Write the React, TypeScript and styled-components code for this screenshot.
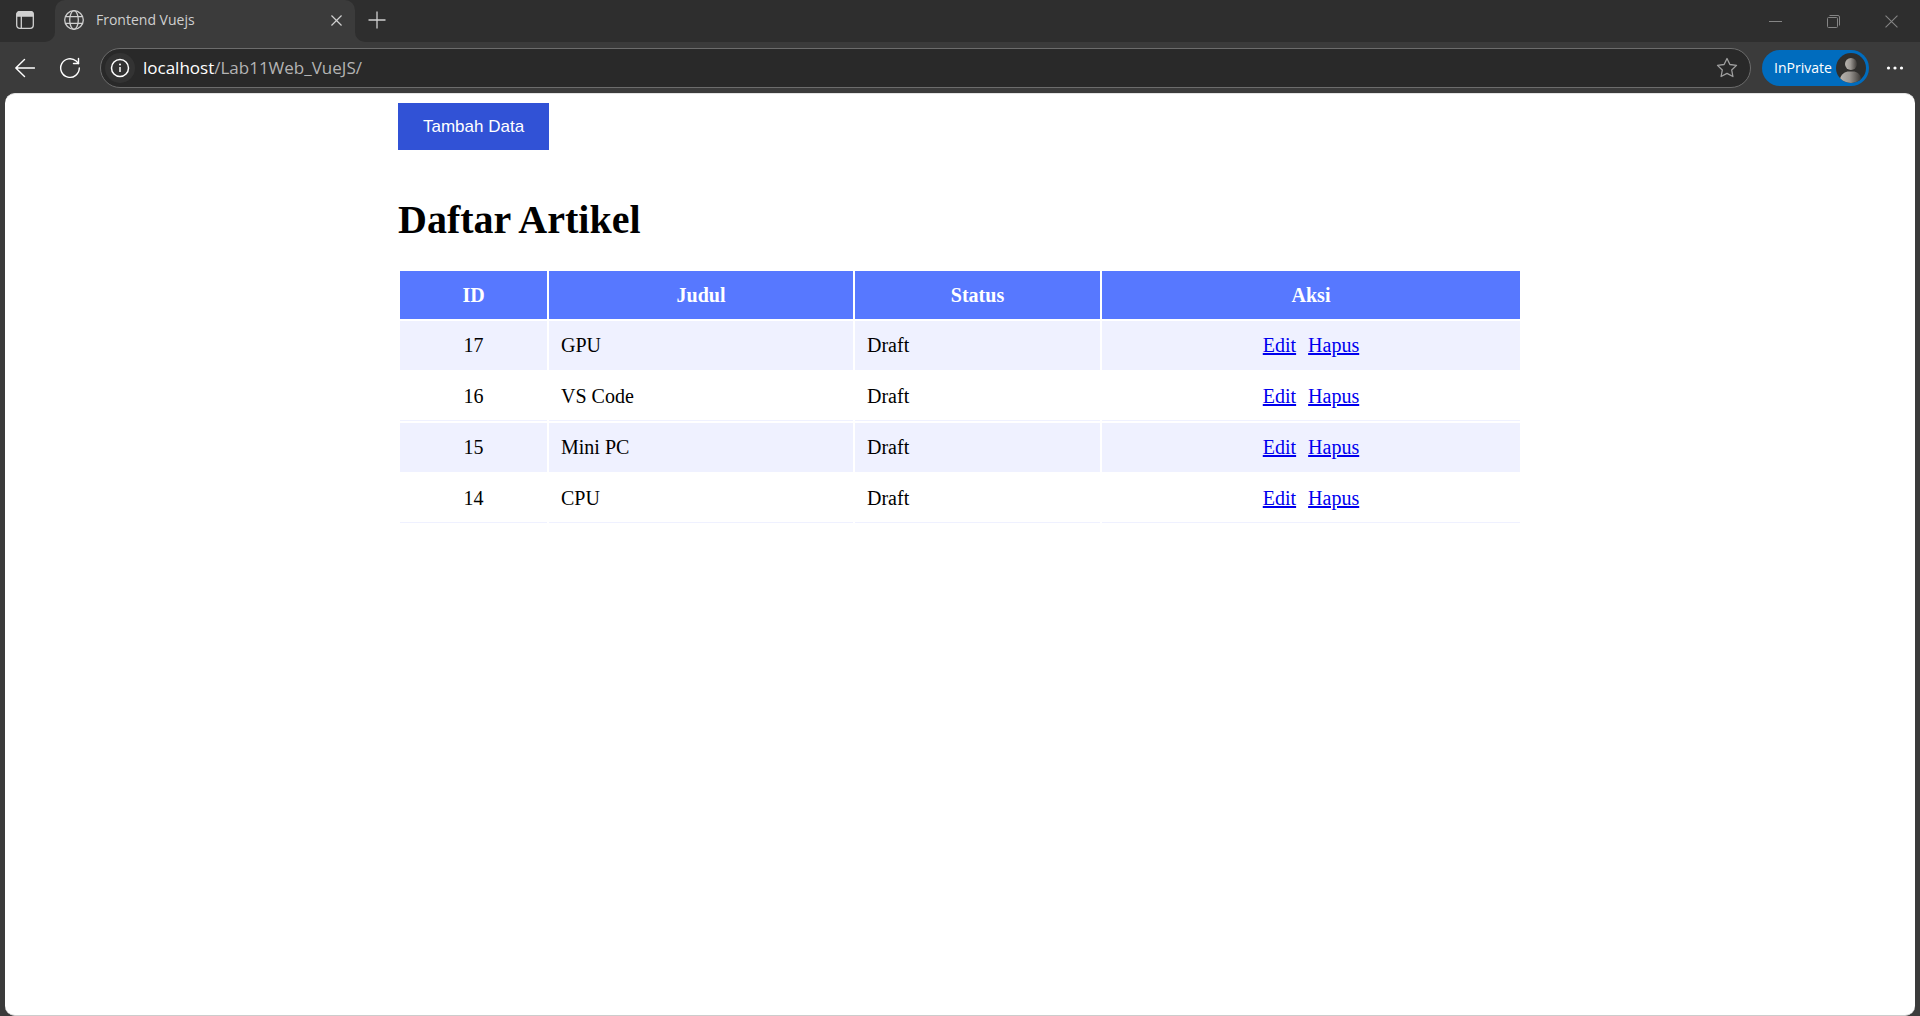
import React from "react";
import styled, { createGlobalStyle } from "styled-components";

const GlobalStyle = createGlobalStyle`
  *, *::before, *::after { box-sizing: border-box; }
  body { margin: 0; background: #3b3b3b; }
  button { margin: 0; padding: 0; border: 0; background: none; color: inherit; cursor: pointer; }
  svg { display: block; }
`;

const uiFont = `"Open Sans", "Noto Sans", sans-serif`;

const Window = styled.div`
  display: flex;
  flex-direction: column;
  min-height: 100vh;
  background: #3b3b3b;
  font-family: ${uiFont};
`;

const TitleBar = styled.header`
  display: flex;
  height: 42px;
  background: #3b3b3b;
  color: #d0d0d0;
`;

const TabActions = styled.div`
  display: flex;
  width: 55px;
  padding-left: 3px;
  background: #2e2e2e;
  border-bottom-right-radius: 10px;
`;

const TabStrip = styled.div`
  display: flex;
  flex: 1;
  background: #2e2e2e;
  border-bottom-left-radius: 10px;
`;

const TabSlot = styled.div`
  width: 300px;
  background: linear-gradient(#2e2e2e 50%, #3b3b3b 50%);
`;

const Tab = styled.div`
  display: flex;
  align-items: center;
  height: 42px;
  padding: 0 4px 2px 9px;
  border-radius: 10px 10px 0 0;
  background: #3b3b3b;
`;

const TabTitle = styled.span`
  flex: 1;
  margin-left: 12px;
  font-size: 14px;
  line-height: 20px;
  color: #cfcfcf;
`;

const IconButton = styled.button<{ $width?: number; $height?: number }>`
  display: flex;
  flex: none;
  align-items: center;
  justify-content: center;
  width: ${(p) => p.$width ?? 44}px;
  height: ${(p) => p.$height ?? 40}px;
`;

const WindowControls = styled.div`
  display: flex;
  margin-left: auto;
  color: #858585;
`;

const Toolbar = styled.nav`
  display: flex;
  align-items: center;
  height: 51px;
  padding: 0 3px;
  color: #ffffff;
`;

const NavButtons = styled.div`
  display: flex;
  gap: 1px;
  margin-right: 8px;
`;

const AddressBar = styled.div`
  display: flex;
  flex: 1;
  align-items: center;
  height: 40px;
  margin-right: 11px;
  padding: 0 1px 0 4px;
  border: 1px solid #6c6c6c;
  border-radius: 20px;
  background: #292929;
  font-size: 17px;
  line-height: 24px;
`;

const SiteInfo = styled.button`
  display: flex;
  align-items: center;
  justify-content: center;
  width: 30px;
  height: 30px;
  border-radius: 50%;
  background: #333333;
`;

const Host = styled.label`
  margin-left: 8px;
  color: #ffffff;
`;

const AddressInput = styled.input`
  flex: 1;
  min-width: 0;
  padding: 0;
  border: 0;
  outline: 0;
  background: transparent;
  color: #b4b4b4;
  font: inherit;
`;

const ProfileButton = styled.button`
  display: flex;
  align-items: center;
  justify-content: space-between;
  width: 107px;
  height: 36px;
  margin-right: 4px;
  padding: 0 3px 0 12px;
  border-radius: 18px;
  background: #006cbe;
  color: #ffffff;
  font-family: ${uiFont};
  font-size: 14px;
  line-height: 20px;
`;

const Viewport = styled.main`
  flex: 1;
  margin: 0 5px;
  padding: 9px;
  border-top: 1px solid #e4e4e4;
  border-bottom: 1px solid #cccccc;
  border-radius: 10px;
  background: #ffffff;
  color: #000000;
  font-family: "Liberation Serif", "Times New Roman", serif;
  font-size: 20px;
  line-height: 24px;
`;

const Container = styled.div`
  max-width: 1124px;
  margin: 0 auto;
`;

const AddButton = styled.button`
  display: block;
  height: 47px;
  padding: 0 25px;
  background: #3152d6;
  color: #ffffff;
  font-family: "Liberation Sans", Arial, sans-serif;
  font-size: 17px;
  line-height: 20px;
`;

const Heading = styled.h1`
  margin: 47px 0 26px;
  font-size: 40px;
  font-weight: 700;
  line-height: 46px;
`;

const ArticleTable = styled.table`
  width: 100%;
  table-layout: fixed;
  border-collapse: separate;
  border-spacing: 2px;
`;

const HeadCell = styled.th<{ $width?: number }>`
  width: ${(p) => (p.$width ? `${p.$width}px` : "auto")};
  padding: 12px;
  background: #5778ff;
  color: #ffffff;
  font-weight: 700;
`;

const Row = styled.tr`
  &:nth-child(odd) { background: #eff1ff; }
`;

const Cell = styled.td<{ $center?: boolean }>`
  padding: 12px;
  border-bottom: 1px solid #eff1ff;
  text-align: ${(p) => (p.$center ? "center" : "left")};
`;

const Action = styled.a`
  color: #0000ee;
  text-decoration: underline;

  & + & { margin-left: 12px; }
`;

const stroke = { fill: "none", stroke: "currentColor" } as const;

const TabActionsIcon = () => (
  <svg width="18" height="18" viewBox="0 0 18 18" {...stroke} strokeWidth="1.3">
    <rect x="0.7" y="0.7" width="16.6" height="16.6" rx="3" />
    <path d="M1 5V3a2.3 2.3 0 0 1 2.3-2.3h11.4A2.3 2.3 0 0 1 17 3v2z" fill="currentColor" />
    <path d="M5.3 5v12" />
  </svg>
);

const GlobeIcon = () => (
  <svg width="20" height="20" viewBox="0 0 20 20" {...stroke} strokeWidth="1.3">
    <circle cx="10" cy="10" r="9.3" />
    <ellipse cx="10" cy="10" rx="4.3" ry="9.3" />
    <path d="M1.5 6.7h17M1.5 13.3h17" />
  </svg>
);

const CrossIcon = ({ size, weight }: { size: number; weight: number }) => (
  <svg width={size} height={size} viewBox="0 0 12 12" {...stroke} strokeWidth={weight}>
    <path d="M.5.5l11 11M11.5.5l-11 11" />
  </svg>
);

const PlusIcon = () => (
  <svg width="18" height="18" viewBox="0 0 18 18" {...stroke} strokeWidth="1.3">
    <path d="M9 .5v17M.5 9h17" />
  </svg>
);

const BackIcon = () => (
  <svg width="20" height="20" viewBox="0 0 20 20" {...stroke} strokeWidth="1.4" strokeLinecap="round" strokeLinejoin="round">
    <path d="M9.5 1.5L.8 10l8.7 8.5M.8 10h18.700" />
  </svg>
);

const ReloadIcon = () => (
  <svg width="22" height="22" viewBox="0 0 22 22" {...stroke} strokeWidth="1.4" strokeLinecap="round" strokeLinejoin="round">
    <path d="M20.3 11A9.3 9.3 0 1 1 17.2 4.1L19.5 6.5" />
    <path d="M19.5 1.5v5h-5" />
  </svg>
);

const InfoIcon = () => (
  <svg width="20" height="20" viewBox="0 0 20 20" {...stroke} strokeWidth="1.5">
    <circle cx="10" cy="10" r="8.5" />
    <path d="M10 9v5" />
    <circle cx="10" cy="6.5" r="1" fill="currentColor" stroke="none" />
  </svg>
);

const StarIcon = () => (
  <svg width="22" height="22" viewBox="0 0 22 22" {...stroke} stroke="#a0a0a0" strokeWidth="1.3" strokeLinejoin="round">
    <path d="M11 1.5l2.9 6 6.6.9-4.8 4.6 1.2 6.500-5.900-3.100-5.900 3.100 1.200-6.500L1.500 8.400l6.600-.9z" />
  </svg>
);

const AvatarIcon = () => (
  <svg width="30" height="30" viewBox="0 0 30 30">
    <defs>
      <linearGradient id="avatar-shade" x1="0" x2="1">
        <stop offset="0" stopColor="#b8b4ae" />
        <stop offset="0.45" stopColor="#9c9893" />
        <stop offset="1" stopColor="#3c3936" />
      </linearGradient>
      <clipPath id="avatar-clip"><circle cx="15" cy="15" r="15" /></clipPath>
    </defs>
    <circle cx="15" cy="15" r="15" fill="#302f2d" />
    <g clipPath="url(#avatar-clip)" fill="url(#avatar-shade)">
      <circle cx="15" cy="11" r="6" />
      <path d="M4 26c1-5 5-7.500 9-7.500h4c4 0 7 2.500 8 6.500v5H4z" />
    </g>
  </svg>
);

const MoreIcon = () => (
  <svg width="18" height="4" viewBox="0 0 18 4" fill="currentColor">
    <circle cx="2.5" cy="2" r="1.6" />
    <circle cx="9" cy="2" r="1.6" />
    <circle cx="15.5" cy="2" r="1.6" />
  </svg>
);

const MinimizeIcon = () => (
  <svg width="13" height="13" viewBox="0 0 13 13" {...stroke}>
    <path d="M0 6.5h13" />
  </svg>
);

const RestoreIcon = () => (
  <svg width="13" height="13" viewBox="0 0 13 13" {...stroke}>
    <rect x="0.5" y="2.5" width="10" height="10" rx="1" />
    <path d="M2.5.5H11a1.500 1.500 0 0 1 1.500 1.500v8.500" />
  </svg>
);

const articles = [
  { id: 17, title: "GPU", status: "Draft" },
  { id: 16, title: "VS Code", status: "Draft" },
  { id: 15, title: "Mini PC", status: "Draft" },
  { id: 14, title: "CPU", status: "Draft" },
];

export default function App() {
  return (
    <>
      <GlobalStyle />
      <Window>
        <TitleBar>
          <TabActions>
            <IconButton aria-label="Tab actions"><TabActionsIcon /></IconButton>
          </TabActions>
          <TabSlot>
            <Tab>
              <GlobeIcon />
              <TabTitle>Frontend Vuejs</TabTitle>
              <IconButton $width={30} $height={30} aria-label="Close tab">
                <CrossIcon size={11} weight={1.3} />
              </IconButton>
            </Tab>
          </TabSlot>
          <TabStrip>
            <IconButton aria-label="New tab"><PlusIcon /></IconButton>
            <WindowControls>
              <IconButton $width={58} $height={42} aria-label="Minimize"><MinimizeIcon /></IconButton>
              <IconButton $width={58} $height={42} aria-label="Restore"><RestoreIcon /></IconButton>
              <IconButton $width={58} $height={42} aria-label="Close"><CrossIcon size={13} weight={1} /></IconButton>
            </WindowControls>
          </TabStrip>
        </TitleBar>
        <Toolbar>
          <NavButtons>
            <IconButton aria-label="Back"><BackIcon /></IconButton>
            <IconButton aria-label="Reload"><ReloadIcon /></IconButton>
          </NavButtons>
          <AddressBar>
            <SiteInfo aria-label="Site information"><InfoIcon /></SiteInfo>
            <Host htmlFor="address">localhost</Host>
            <AddressInput id="address" type="text" defaultValue="/Lab11Web_VueJS/" />
            <IconButton $height={30} aria-label="Add to favorites"><StarIcon /></IconButton>
          </AddressBar>
          <ProfileButton>InPrivate<AvatarIcon /></ProfileButton>
          <IconButton aria-label="More"><MoreIcon /></IconButton>
        </Toolbar>
        <Viewport>
          <Container>
            <AddButton>Tambah Data</AddButton>
            <Heading>Daftar Artikel</Heading>
            <ArticleTable>
              <thead>
                <tr>
                  <HeadCell $width={147}>ID</HeadCell>
                  <HeadCell $width={304}>Judul</HeadCell>
                  <HeadCell $width={245}>Status</HeadCell>
                  <HeadCell>Aksi</HeadCell>
                </tr>
              </thead>
              <tbody>
                {articles.map((article) => (
                  <Row key={article.id}>
                    <Cell $center>{article.id}</Cell>
                    <Cell>{article.title}</Cell>
                    <Cell>{article.status}</Cell>
                    <Cell $center>
                      <Action href="#edit">Edit</Action>
                      <Action href="#hapus">Hapus</Action>
                    </Cell>
                  </Row>
                ))}
              </tbody>
            </ArticleTable>
          </Container>
        </Viewport>
      </Window>
    </>
  );
}
